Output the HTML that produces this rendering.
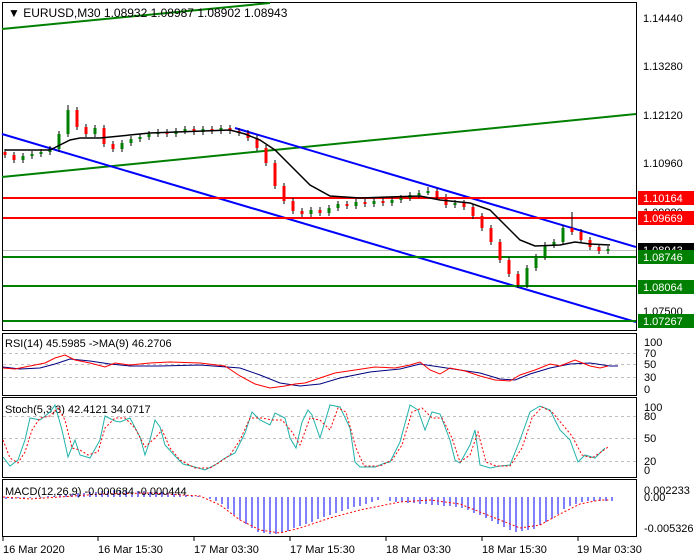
<!DOCTYPE html>
<html><head><meta charset="utf-8"><style>
body{margin:0;background:#fff;}
svg{display:block;font-family:"Liberation Sans",sans-serif;font-size:11px;}
</style></head><body>
<svg width="700" height="560" viewBox="0 0 700 560" xmlns="http://www.w3.org/2000/svg">
<rect width="700" height="560" fill="#fff"/>
<g fill="none" stroke="#000" stroke-width="1">
<rect x="2.5" y="2.5" width="634" height="328"/>
<rect x="2.5" y="333.5" width="634" height="62"/>
<rect x="2.5" y="397.5" width="634" height="80"/>
<rect x="2.5" y="479.5" width="634" height="57"/>
</g>
<g stroke="#c0c0c0" stroke-dasharray="3,3" stroke-width="1">
<line x1="3" x2="636" y1="353.5" y2="353.5"/><line x1="3" x2="636" y1="364.5" y2="364.5"/><line x1="3" x2="636" y1="377.5" y2="377.5"/>
<line x1="3" x2="636" y1="416.5" y2="416.5"/><line x1="3" x2="636" y1="438.5" y2="438.5"/><line x1="3" x2="636" y1="461.5" y2="461.5"/>
</g>
<line x1="3" x2="636" y1="250.5" y2="250.5" stroke="#c0c0c0"/>
<g stroke-width="2" fill="none">
<line x1="2" y1="29" x2="270" y2="3" stroke="#008000"/>
<line x1="2" y1="177" x2="636" y2="114" stroke="#008000"/>
<line x1="2" y1="134" x2="636" y2="322" stroke="#0000ff"/>
<line x1="235" y1="128" x2="636" y2="247" stroke="#0000ff"/>
<line x1="3" y1="198" x2="636" y2="198" stroke="#ff0000"/>
<line x1="3" y1="218" x2="636" y2="218" stroke="#ff0000"/>
<line x1="3" y1="257" x2="636" y2="257" stroke="#008000"/>
<line x1="3" y1="286" x2="636" y2="286" stroke="#008000"/>
<line x1="3" y1="321" x2="636" y2="321" stroke="#008000"/>
</g>
<!-- wicks -->
<path fill="none" stroke="#000" stroke-width="1" d="M5 149V158M14 152V163M23 153V163M32 151V159M41 149V157M50 146V155M59 131V152M68 105V137M77 107V130M86 124V137M95 125V137M104 125V147M113 141V152M122 140V152M131 136V146M140 134V142M149 131V140M158 129V137M167 129V137M176 128V137M185 126V134M194 126V135M203 126V135M212 126V134M221 125V134M230 125V134M239 128V136M248 130V141M257 135V151M266 145V166M275 160V189M284 183V204M293 198V214M302 208V217M311 207V217M320 207V216M329 205V216M338 201V211M347 201V209M356 199V209M365 199V207M374 198V207M383 198V206M392 197V206M401 195V203M410 192V201M419 190V198M428 187V195M437 188V200M446 194V208M455 200V208M464 200V210M473 204V219M482 213V231M491 225V245M500 239V263M509 257V277M518 271V288M527 265V288M536 254V271M545 242V260M554 239V248M563 225V245M572 212V235M581 229V243M590 237V250M599 244V254M608 246V254"/>
<!-- green bodies -->
<path fill="none" stroke="#008000" stroke-width="3" d="M23 156V160M32 154V156M41 152V154M50 149V152M59 134V149M68 110V134M95 128V134M122 143V149M131 139V143M140 137V139M149 134V137M158 132V134M176 131V134M185 129V131M203 129V132M221 128V131M311 210V214M329 208V213M338 204V208M356 202V206M374 201V204M392 200V203M401 198V200M410 195V198M419 193V195M428 191V193M455 203V205M527 268V285M536 257V268M545 245V257M554 242V245M563 228V242M608 249V251"/>
<!-- red bodies -->
<path fill="none" stroke="#ff0000" stroke-width="3" d="M5 152V155M14 155V160M77 110V127M86 127V134M104 128V144M113 144V149M167 132V134M194 129V132M212 129V131M230 128V131M239 131V133M248 133V138M257 138V148M266 148V163M275 163V186M284 186V201M293 201V211M302 211V214M320 210V213M347 204V206M365 202V204M383 201V203M437 191V197M446 197V205M464 203V207M473 207V216M482 216V228M491 228V242M500 242V260M509 260V274M518 274V285M572 228V232M581 232V240M590 240V247M599 247V251"/>
<polyline fill="none" stroke="#000" stroke-width="1.5" points="5,150 50,150 60,145 70,140 80,138 100,138 150,133 230,130 245,134 260,140 275,150 290,165 310,185 330,196 360,198 420,196 440,200 470,203 490,210 505,225 520,240 535,246 560,245 575,242 590,244 610,245"/>
<g fill="#000">
<text x="8" y="17" font-size="12">▼ EURUSD,M30  1.08932 1.08987 1.08902 1.08943</text>
<text x="643" y="22">1.14440</text><text x="643" y="70">1.13280</text><text x="643" y="119">1.12120</text><text x="643" y="167">1.10960</text>
<text x="643" y="216">1.09880</text><text x="643" y="315">1.07500</text>
</g>
<rect x="638" y="191" width="56" height="14" fill="#ff0000"/><text x="643" y="202" fill="#fff">1.10164</text>
<rect x="638" y="211" width="56" height="14" fill="#ff0000"/><text x="643" y="222" fill="#fff">1.09669</text>
<rect x="638" y="243" width="56" height="12" fill="#000"/><text x="643" y="254" fill="#fff">1.08943</text>
<rect x="638" y="250" width="56" height="14" fill="#008000"/><text x="643" y="261" fill="#fff">1.08746</text>
<rect x="638" y="280" width="56" height="14" fill="#008000"/><text x="643" y="291" fill="#fff">1.08064</text>
<rect x="638" y="314" width="56" height="14" fill="#008000"/><text x="643" y="325" fill="#fff">1.07267</text>
<g fill="#000">
<text x="644" y="346">100</text><text x="644" y="357">70</text><text x="644" y="368">50</text><text x="644" y="381">30</text><text x="644" y="393">0</text>
<text x="644" y="411">100</text><text x="644" y="420">80</text><text x="644" y="442">50</text><text x="644" y="465">20</text><text x="644" y="474">0</text>
<text x="644" y="494">0.002233</text><text x="644" y="501">0.00</text><text x="644" y="532">-0.005326</text>
<text x="5" y="347">RSI(14) 45.5985  -&gt;MA(9) 46.2706</text>
<text x="5" y="413">Stoch(5,3,3) 42.4121 34.0717</text>
<text x="3" y="553">16 Mar 2020</text><text x="98" y="553">16 Mar 15:30</text><text x="194" y="553">17 Mar 03:30</text><text x="290" y="553">17 Mar 15:30</text><text x="386" y="553">18 Mar 03:30</text><text x="482" y="553">18 Mar 15:30</text><text x="577" y="553">19 Mar 03:30</text>
</g>
<g stroke="#000"><line x1="3" x2="3" y1="537" y2="541"/><line x1="98" x2="98" y1="537" y2="541"/><line x1="194" x2="194" y1="537" y2="541"/><line x1="290" x2="290" y1="537" y2="541"/><line x1="386" x2="386" y1="537" y2="541"/><line x1="482" x2="482" y1="537" y2="541"/><line x1="578" x2="578" y1="537" y2="541"/></g>
<polyline fill="none" stroke="#000080" points="3,367 20,369 40,368 55,364 70,359 90,361 110,364 130,366 160,366 200,365 240,368 260,375 280,383 300,386 320,384 340,378 370,372 400,369 420,364 440,367 460,370 480,373 500,379 515,380 530,374 550,368 570,364 590,363 610,366 618,366"/>
<polyline fill="none" stroke="#ff0000" points="3,368 15,369 30,366 45,363 55,358 65,355 75,360 90,363 105,367 115,363 130,365 150,363 170,362 200,363 225,366 240,376 255,384 270,388 285,386 295,384 305,383 320,378 335,373 355,370 375,367 395,368 410,365 420,362 430,370 440,374 450,368 465,371 480,376 495,380 510,381 520,375 535,370 550,364 560,366 575,360 590,366 600,368 608,366"/>
<polyline fill="none" stroke="#20b2aa" points="3,457 10,466 18,460 25,440 30,418 40,420 50,412 55,405 62,430 68,457 75,440 80,455 90,458 100,440 105,416 115,421 120,422 125,420 130,418 140,437 145,455 150,440 155,420 160,427 165,445 175,456 183,464 195,467 205,470 215,465 225,458 235,453 245,433 252,412 260,420 270,425 275,413 285,418 290,438 296,448 302,422 308,410 312,415 320,438 330,405 340,407 350,428 355,462 360,467 375,467 385,463 390,462 400,442 410,405 418,410 425,430 432,412 440,414 450,440 455,460 460,463 470,445 475,430 480,465 490,468 500,466 510,465 520,440 530,412 540,406 550,410 560,430 570,440 578,462 585,455 595,458 605,448"/>
<polyline fill="none" stroke="#ff0000" stroke-dasharray="2,2" points="3,440 10,458 18,463 25,452 32,430 40,418 50,416 58,408 65,420 72,448 80,450 88,455 98,452 105,428 115,418 125,418 135,428 145,447 155,438 162,430 170,448 180,460 195,468 210,468 220,462 230,455 240,440 250,418 262,418 272,420 282,420 292,432 300,445 310,418 320,420 330,430 338,408 346,412 356,448 364,466 380,466 392,460 402,445 412,412 422,408 432,418 442,418 452,438 460,462 470,455 478,432 486,462 496,466 510,466 522,448 532,418 542,407 552,412 562,424 572,436 582,455 592,458 604,450 608,447"/>
<path fill="none" stroke="#0000ff" stroke-width="1" d="M6 497V499M12 497V499M18 497V498M24 497V498M30 497V498M36 497V497.5M42 497V497.5M48 497V496M54 497V496M60 497V495M66 497V494M72 497V494M78 497V493M84 497V493M90 497V492M96 497V492M102 497V491M108 497V491M114 497V490M120 497V490M126 497V490M132 497V491M138 497V491M144 497V491M150 497V492M156 497V492M162 497V492M168 497V493M174 497V494M180 497V494M186 497V495M192 497V495M198 497V496M210 497V499M216 497V501M222 497V504M228 497V509M234 497V515M240 497V520M246 497V524M252 497V528M258 497V532M264 497V533M270 497V534M276 497V534M282 497V533M288 497V531M294 497V528M300 497V526M306 497V524M312 497V522M318 497V519M324 497V517M330 497V515M336 497V513M342 497V511M348 497V509M354 497V507M360 497V506M366 497V504M372 497V502M378 497V500M390 497V501M396 497V502M402 497V502M408 497V503M414 497V503M420 497V504M426 497V504M432 497V505M438 497V505M444 497V506M450 497V506M456 497V507M462 497V508M468 497V510M474 497V513M480 497V515M486 497V518M492 497V521M498 497V524M504 497V527M510 497V530M516 497V532M522 497V531M528 497V530M534 497V529M540 497V525M546 497V522M552 497V519M558 497V514M564 497V509M570 497V506M576 497V504M582 497V502M588 497V501M594 497V501M600 497V501M606 497V501M612 497V501"/>
<polyline fill="none" stroke="#ff0000" stroke-dasharray="2,2" points="3,497 30,499 60,497 100,494 150,493 200,496 220,505 240,520 260,530 280,533 300,528 330,518 360,510 400,502 430,500 460,504 480,512 500,520 520,528 540,525 560,514 580,504 600,500 610,500"/>
<text x="5" y="495" fill="#000">MACD(12,26,9) -0.000684 -0.000444</text>
</svg>
</body></html>
